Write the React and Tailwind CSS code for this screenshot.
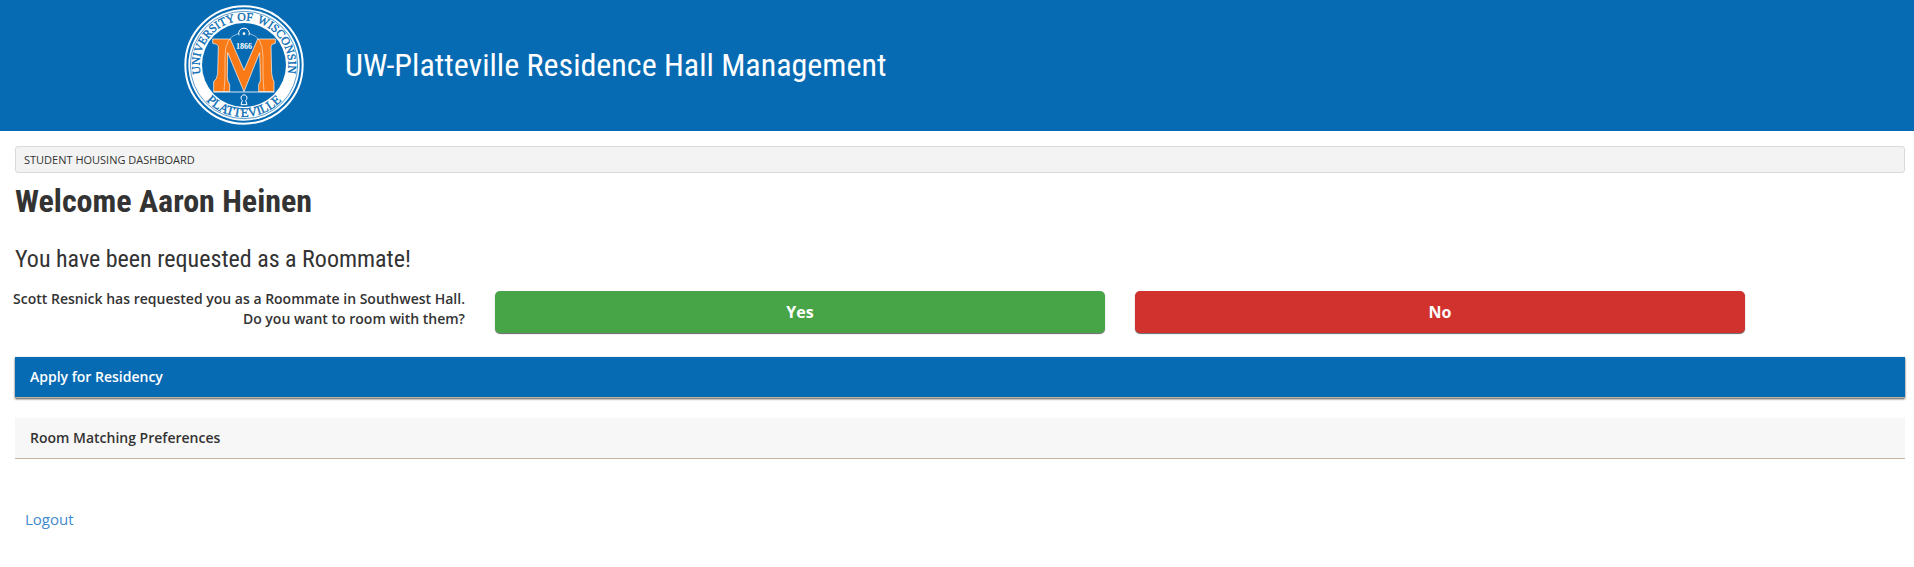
function Seal() {
  return (
    <svg viewBox="0 0 360 360" className="size-[120px] shrink-0" role="img" aria-label="University of Wisconsin Platteville seal">
      <defs>
        <path id="seal-top" d="M 64.8 246.5 A 133 133 0 1 1 295.2 246.5" />
        <path id="seal-bottom" d="M 30 225 A 157 157 0 0 0 330 225" />
      </defs>
      <circle cx="180" cy="180" r="176" fill="none" stroke="#fff" strokeWidth="6" />
      <circle cx="180" cy="180" r="167" fill="#fff" />
      <circle cx="180" cy="180" r="161" fill="none" stroke="#076bb4" strokeWidth="2" />
      <circle cx="180" cy="180" r="126" fill="#076bb4" />
      <g fill="#076bb4" fontFamily="'Liberation Serif', serif" fontSize="35" textAnchor="middle" stroke="#076bb4" strokeWidth="1">
        <text>
          <textPath href="#seal-top" startOffset="26.5%">UNIVERSITY</textPath>
        </text>
        <text>
          <textPath href="#seal-top" startOffset="50.5%">OF</textPath>
        </text>
        <text>
          <textPath href="#seal-top" startOffset="74.5%">WISCONSIN</textPath>
        </text>
        <text fontSize="39">
          <textPath href="#seal-bottom" startOffset="50%">PLATTEVILLE</textPath>
        </text>
      </g>
      <path d="M86 102 H139 L180 196 L221 102 H274 V115 Q262 116 261 124 L263 205 Q265 222 270 230 V260 H224 V238 Q231 230 229 215 L227 143 L180 260 L131 143 L130 215 Q130 230 137 238 V260 H89 V230 Q100 222 101 205 L103 124 Q100 116 86 115 Z" fill="#f97a16" stroke="#fff" strokeWidth="2" />
      <path d="M120 257 Q122 240 123 210 V155 Q123 96 162 86 Q180 82 198 86 Q237 96 237 155 V210 Q238 240 240 257" fill="none" stroke="#fff" strokeWidth="1.5" />
      <path d="M89 261 H271" stroke="#fff" strokeWidth="2.5" />
      <path d="M165 91 A16 16 0 1 1 195 91" fill="#076bb4" stroke="#fff" strokeWidth="3" />
      <circle cx="180" cy="86" r="4" fill="#fff" />
      <text x="180" y="132" textAnchor="middle" fill="#fff" fontFamily="'Liberation Serif', serif" fontSize="24" fontWeight="700">1866</text>
      <path d="M171 299 H189 L185 286 A9 9 0 1 0 175 286 Z" fill="#076bb4" stroke="#fff" strokeWidth="3" />
    </svg>
  );
}

export default function App() {
  return (
    <div className="bg-white pb-12 font-['Open_Sans','Noto_Sans',sans-serif] text-sm text-[#333]">
      <header className="flex items-center gap-[41px] bg-[#076bb4] pt-[5px] pb-[6px] pl-[184px]">
        <Seal />
        <div className="font-['Roboto_Condensed',Roboto,sans-serif] text-[32px] leading-9 text-white">
          UW-Platteville Residence Hall Management
        </div>
      </header>
      <main className="pt-[15px] pr-[9px] pl-[15px]">
        <nav aria-label="Breadcrumb" className="rounded-[3px] border border-[#dadada] bg-[#f3f3f3] px-2 py-1 text-[11px] leading-[17px] uppercase">
          Student Housing Dashboard
        </nav>
        <h1 className="mt-[10px] font-['Roboto_Condensed',Roboto,sans-serif] text-[32px] leading-9 font-bold">
          Welcome Aaron Heinen
        </h1>
        <h2 className="mt-[26px] font-['Roboto_Condensed',Roboto,sans-serif] text-2xl leading-7">
          You have been requested as a Roommate!
        </h2>
        <section className="mt-4 grid grid-cols-12 items-start gap-[30px]">
          <p className="col-span-3 -ml-2 text-right leading-5 font-semibold">
            Scott Resnick has requested you as a Roommate in Southwest Hall.
            <br />
            Do you want to room with them?
          </p>
          <button type="button" className="col-span-4 mt-[2px] h-[42px] rounded-[5px] bg-[#48a547] text-base font-bold text-white shadow-[0_1px_1px_rgba(0,0,0,0.6)]">
            Yes
          </button>
          <button type="button" className="col-span-4 mt-[2px] h-[42px] rounded-[5px] bg-[#d1322d] text-base font-bold text-white shadow-[0_1px_1px_rgba(0,0,0,0.6)]">
            No
          </button>
        </section>
        <a href="#apply" className="mt-6 block border-b border-[#c5b49a] bg-[#076bb4] px-[15px] py-[10px] leading-5 font-semibold text-white shadow-[0_1px_2px_rgba(0,0,0,0.7)]">
          Apply for Residency
        </a>
        <a href="#preferences" className="mt-5 block border-b border-[#c5b49a] bg-[#f7f7f7] px-[15px] py-[10px] leading-5 font-semibold">
          Room Matching Preferences
        </a>
        <a href="#logout" className="mt-12 ml-[10px] inline-block text-[15px] leading-6 text-[#428bca]">
          Logout
        </a>
      </main>
    </div>
  );
}
